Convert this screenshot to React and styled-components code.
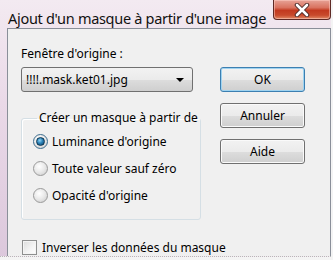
import React from 'react'
import styled, { createGlobalStyle } from 'styled-components'

const Global = createGlobalStyle`
  html, body {
    margin: 0;
    padding: 0;
    background: #f4f4f4;
  }
  body {
    font-family: 'Noto Sans', 'Open Sans', sans-serif;
  }
`

const Window = styled.div`
  width: 331px;
  height: 257px;
  box-sizing: border-box;
  padding: 0 0 0 7px;
  display: flex;
  flex-direction: column;
  background: linear-gradient(180deg, #f3eaf1 0%, #ead9e8 40%, #dcc8dc 100%);
  border-bottom: 1px dotted #b8b8b8;
  overflow: hidden;
  white-space: nowrap;
`

const TitleBar = styled.div`
  height: 31px;
  display: flex;
  align-items: flex-start;
  justify-content: space-between;
`

const Title = styled.div`
  margin: 8px 0 0 1px;
  font-size: 14.5px;
  color: #111;
  letter-spacing: -0.3px;
  flex-shrink: 0;
`

const CloseBtn = styled.div`
  width: 58px;
  height: 20px;
  box-sizing: border-box;
  border: 1px solid #5e2a25;
  border-top: none;
  border-radius: 0 0 4px 4px;
  background: linear-gradient(180deg, #e7a397 0%, #d9725f 40%, #c2391f 55%, #c84a2c 80%, #e08a66 100%);
  box-shadow: inset 0 0 0 1px rgba(255, 210, 200, 0.5);
  display: flex;
  align-items: center;
  justify-content: center;
  flex-shrink: 0;
`

const Panel = styled.div`
  flex: 1;
  background: #f0f0f0;
  border: 1px solid #8a8f99;
  border-bottom: none;
  display: flex;
  padding: 14px 0 0 13px;
  gap: 27px;
  font-size: 12px;
  color: #000;
`

const LeftCol = styled.div`
  width: 172px;
  display: flex;
  flex-direction: column;
`

const Label = styled.div`
  line-height: 16px;
  margin: 3px 0 0 0;
`

const Combo = styled.div`
  margin-top: 5px;
  height: 25px;
  box-sizing: border-box;
  border: 1px solid #707070;
  border-radius: 3px;
  background: linear-gradient(180deg, #f2f2f2 0%, #ebebeb 50%, #dddddd 51%, #cfcfcf 100%);
  display: flex;
  align-items: center;
  justify-content: space-between;
  padding: 0 8px 0 4px;
`

const Arrow = styled.div`
  width: 0;
  height: 0;
  border-left: 4px solid transparent;
  border-right: 4px solid transparent;
  border-top: 4px solid #000;
`

const Group = styled.fieldset`
  margin: 19px 0 0 0;
  width: 170px;
  height: 109px;
  box-sizing: border-box;
  border: 1px solid #d5dfe5;
  border-radius: 3px;
  padding: 8px 0 0 11px;
  display: flex;
  flex-direction: column;
  gap: 11px;
  box-shadow: inset 1px 1px 0 #fff;
`

const Legend = styled.legend`
  padding: 0 2px;
  margin-left: 4px;
  line-height: 14px;
  white-space: nowrap;
`

const Option = styled.div`
  display: flex;
  align-items: center;
  gap: 4px;
  height: 16px;
`

const Radio = styled.span`
  width: 13px;
  height: 13px;
  border-radius: 50%;
  border: 1px solid ${p => (p.$checked ? '#3d6d8f' : '#9a9a9a')};
  background: radial-gradient(circle at 40% 35%, #ffffff 0%, #e8e8e8 50%, #c8c8c8 100%);
  display: flex;
  align-items: center;
  justify-content: center;
  &::after {
    content: '';
    display: ${p => (p.$checked ? 'block' : 'none')};
    width: 7px;
    height: 7px;
    border-radius: 50%;
    background: radial-gradient(circle at 40% 35%, #8fd3f5 0%, #2a82b8 45%, #0d3f63 100%);
    border: 1px solid #0b3552;
  }
`

const CheckRow = styled.div`
  margin-top: 19px;
  margin-left: 1px;
  display: flex;
  align-items: center;
  gap: 5px;
`

const Check = styled.span`
  width: 13px;
  height: 13px;
  flex-shrink: 0;
  border: 1px solid #8e8f8f;
  background: linear-gradient(135deg, #dcdcdc 0%, #f4f4f4 60%, #ffffff 100%);
  box-shadow: inset 0 0 0 1px #f4f4f4;
`

const RightCol = styled.div`
  display: flex;
  flex-direction: column;
  gap: 11px;
  padding-top: 24px;
`

const Button = styled.div`
  width: 85px;
  height: 25px;
  box-sizing: border-box;
  border: 1px solid ${p => (p.$default ? '#3c7fb1' : '#707070')};
  border-radius: 3px;
  background: linear-gradient(180deg, #f2f2f2 0%, #ebebeb 50%, #dddddd 51%, #cfcfcf 100%);
  box-shadow: ${p => (p.$default ? 'inset 0 0 0 1px #9fd3f0' : 'inset 0 0 0 1px #fafafa')};
  display: flex;
  align-items: center;
  justify-content: center;
`

const options = [
  { label: "Luminance d'origine", checked: true },
  { label: 'Toute valeur sauf zéro' },
  { label: "Opacité d'origine" },
]

export default function App() {
  return (
    <>
      <Global />
      <Window>
        <TitleBar>
          <Title>Ajout d'un masque à partir d'une image</Title>
          <CloseBtn>
            <svg width="20" height="14" viewBox="0 0 20 14">
              <path d="M5 2 L15 12 M15 2 L5 12" stroke="#4a2a28" strokeWidth="4.5" strokeLinecap="round" />
              <path d="M5 2 L15 12 M15 2 L5 12" stroke="#ffffff" strokeWidth="2.6" strokeLinecap="round" />
            </svg>
          </CloseBtn>
        </TitleBar>
        <Panel>
          <LeftCol>
            <Label>Fenêtre d'origine :</Label>
            <Combo>
              <span>!!!!.mask.ket01.jpg</span>
              <Arrow />
            </Combo>
            <Group>
              <Legend>Créer un masque à partir de</Legend>
              {options.map(o => (
                <Option key={o.label}>
                  <Radio $checked={o.checked} />
                  <span>{o.label}</span>
                </Option>
              ))}
            </Group>
            <CheckRow>
              <Check />
              <span>Inverser les données du masque</span>
            </CheckRow>
          </LeftCol>
          <RightCol>
            <Button $default>OK</Button>
            <Button>Annuler</Button>
            <Button>Aide</Button>
          </RightCol>
        </Panel>
      </Window>
    </>
  )
}
